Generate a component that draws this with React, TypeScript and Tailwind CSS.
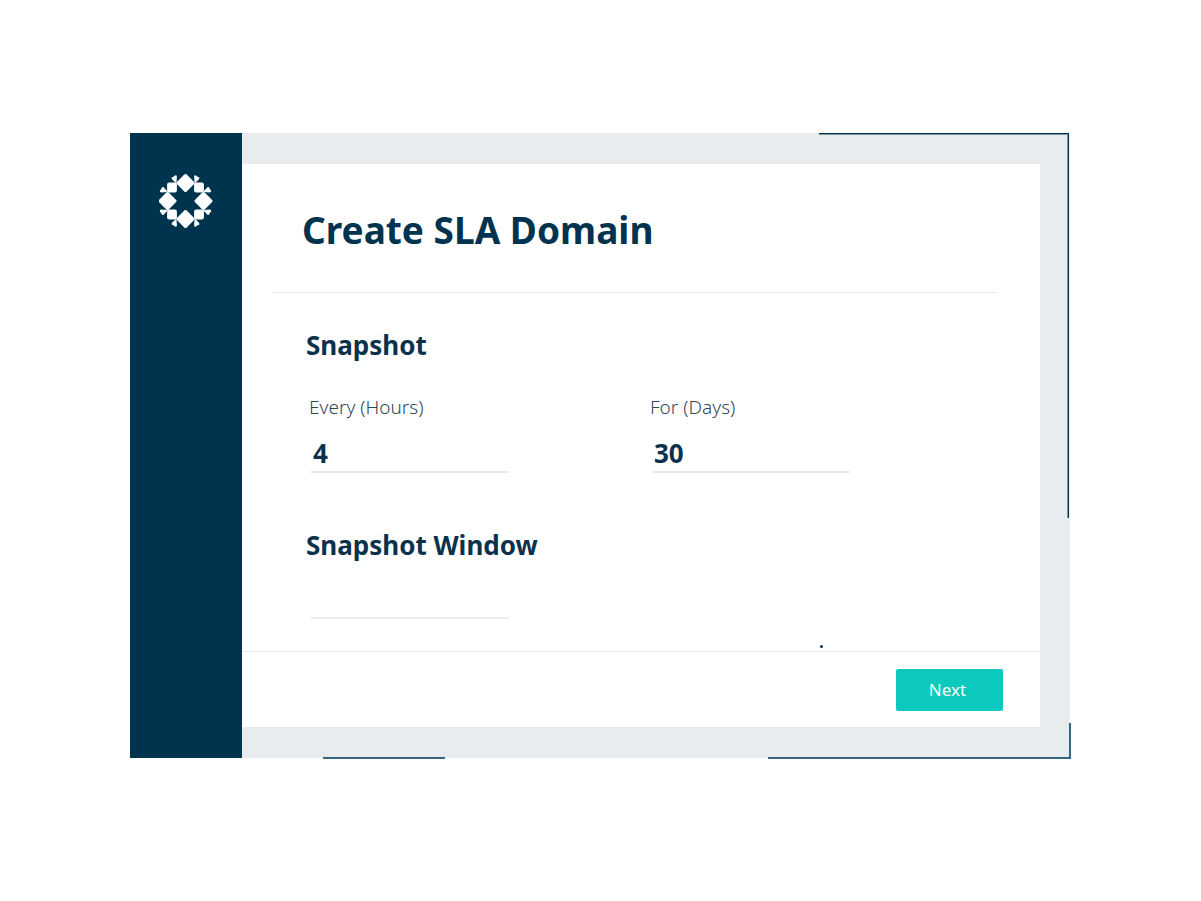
import { useState } from 'react';

interface FieldProps {
  id: string;
  label: string;
  value: string;
  onChange: (value: string) => void;
}

function Logo() {
  return (
    <svg width="54" height="54" viewBox="-26.5 -27 54 54" fill="#fff" role="img" aria-label="Home">
      {[0, 90, 180, 270].map((angle) => (
        <g key={angle} transform={`rotate(${angle})`}>
          <rect x="-6.8" y="-6.8" width="13.6" height="13.6" rx="1.4" transform="translate(0 -18) rotate(45)" />
          <rect x="8.6" y="-18.4" width="9.8" height="9.8" rx="2" />
          <path d="M9 -18.2 L8.6 -24.4 Q8.8 -26 10.4 -25.6 Q11.6 -25 11.8 -24.2 Q13 -24.4 13.8 -23.4 Q14.2 -22 13 -21.2 L9.8 -18.2 Z" />
          <path d="M18.2 -9 L24.4 -8.6 Q26 -8.8 25.6 -10.4 Q25 -11.6 24.2 -11.8 Q24.4 -13 23.4 -13.8 Q22 -14.2 21.2 -13 L18.2 -9.8 Z" />
        </g>
      ))}
    </svg>
  );
}

function Field({ id, label, value, onChange }: FieldProps) {
  return (
    <div className="w-[200px]">
      <label htmlFor={id} className="block text-[19px] leading-[26px] font-light text-[#33475b]">
        {label}
      </label>
      <input
        id={id}
        type="text"
        inputMode="numeric"
        value={value}
        onChange={(e) => onChange(e.target.value)}
        className="mt-[15px] ml-[2px] block h-[38px] w-[198px] border-b-2 border-[#e8ecef] bg-transparent px-[2px] text-[26px] leading-[36px] font-bold text-[#0b324c] outline-none"
      />
    </div>
  );
}

export default function App() {
  const [hours, setHours] = useState('4');
  const [days, setDays] = useState('30');
  const [snapshotWindow, setSnapshotWindow] = useState('');

  return (
    <div className="bg-white py-[133px] pr-[131px] pl-[130px] font-['Noto_Sans',sans-serif]">
      <div className="relative flex bg-[#e8ecef]">
        <aside className="flex w-28 shrink-0 justify-center bg-[#00334e] pt-[41px]">
          <Logo />
        </aside>

        <main className="my-[31px] mr-[30px] min-w-0 flex-1 bg-white">
          <header className="mr-[43px] ml-[30px] border-b border-[#e8ecef] px-[30px] pt-10 pb-9">
            <h1 className="text-[37px] leading-[52px] font-bold text-[#00334e]">Create SLA Domain</h1>
          </header>

          <form id="sla-form" className="px-16 pt-[34px] pb-8" onSubmit={(e) => e.preventDefault()}>
            <h2 className="text-[26px] leading-9 font-bold text-[#0b324c]">Snapshot</h2>
            <div className="mt-[31px] flex flex-wrap gap-[141px] pl-[3px]">
              <Field id="hours" label="Every (Hours)" value={hours} onChange={setHours} />
              <Field id="days" label="For (Days)" value={days} onChange={setDays} />
            </div>

            <h2 id="window-title" className="mt-[54px] text-[26px] leading-9 font-bold text-[#0b324c]">
              Snapshot Window
            </h2>
            <input
              type="text"
              aria-labelledby="window-title"
              value={snapshotWindow}
              onChange={(e) => setSnapshotWindow(e.target.value)}
              className="mt-[18px] ml-[5px] block h-[38px] w-[198px] border-b-2 border-[#e8ecef] bg-transparent px-[2px] text-[26px] font-bold text-[#0b324c] outline-none"
            />
          </form>

          <footer className="flex justify-end border-t border-[#e8ecef] pt-[17px] pr-[37px] pb-4">
            <button
              type="submit"
              form="sla-form"
              className="h-[42px] w-[107px] rounded-[2px] bg-[#0bc9bc] pr-1 text-[17px] text-white"
            >
              Next
            </button>
          </footer>
        </main>

        {/* accent lines around the frame */}
        <span className="pointer-events-none absolute top-0 right-px h-[385px] w-[250px] border-t border-r border-[#00334e] shadow-[inset_-1px_1px_0_#7a94a5]" />
        <span className="pointer-events-none absolute right-[-1px] bottom-[-1px] h-9 w-[303px] border-r-2 border-b-2 border-[#396580]" />
        <span className="pointer-events-none absolute bottom-[-1px] left-[193px] h-[2px] w-[122px] bg-[#396580]" />
        <span className="pointer-events-none absolute right-[247px] bottom-[110px] size-[3px] rounded-full bg-[#00334e]" />
      </div>
    </div>
  );
}
